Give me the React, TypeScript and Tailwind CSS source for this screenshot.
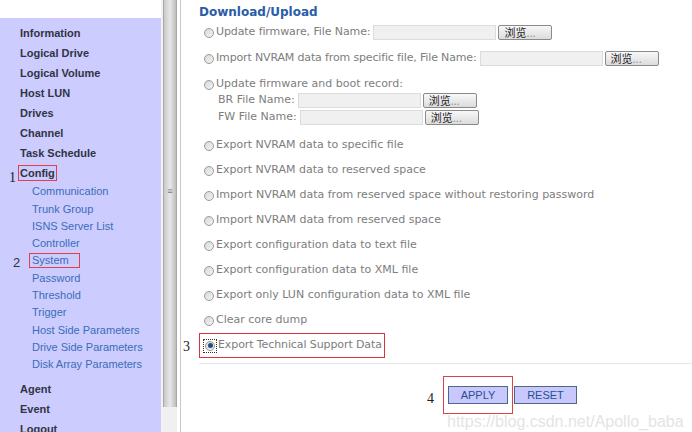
import React from 'react';

const TOP_MENU = ['Information', 'Logical Drive', 'Logical Volume', 'Host LUN', 'Drives', 'Channel', 'Task Schedule'];
const SUB_BEFORE = ['Communication', 'Trunk Group', 'ISNS Server List', 'Controller'];
const SUB_AFTER = ['Password', 'Threshold', 'Trigger', 'Host Side Parameters', 'Drive Side Parameters', 'Disk Array Parameters'];
const BOTTOM_MENU = ['Agent', 'Event', 'Logout'];

const OPTIONS = [
  'Export NVRAM data to specific file',
  'Export NVRAM data to reserved space',
  'Import NVRAM data from reserved space without restoring password',
  'Import NVRAM data from reserved space',
  'Export configuration data to text file',
  'Export configuration data to XML file',
  'Export only LUN configuration data to XML file',
  'Clear core dump',
];

function Radio({ checked = false }: { checked?: boolean }) {
  return (
    <span className="w-[10px] h-[10px] rounded-full border border-[#9a9a9a] bg-gradient-to-br from-[#d8d8d8] to-[#f4f4f4] flex items-center justify-center shrink-0">
      {checked && <span className="w-[5px] h-[5px] rounded-full bg-[#1f4f7a]" />}
    </span>
  );
}

function FileInput() {
  return (
    <span className="flex items-center gap-[2px]">
      <span className="w-[123px] h-[15px] bg-[#f0f0f0] border border-[#dcdcdc]" />
      <span className="w-[54px] h-[15px] border border-[#8a8a8a] rounded-[2px] bg-gradient-to-b from-[#f8f8f8] to-[#dcdcdc] flex items-center pl-[5px] text-[11px] leading-none text-[#222] font-['Noto_Sans_CJK_SC',sans-serif]">
        浏览<span className="text-[#999]">...</span>
      </span>
    </span>
  );
}

export default function App() {
  return (
    <div className="w-[692px] h-[432px] overflow-hidden flex bg-white">
      {/* Sidebar */}
      <div className="w-[161px] shrink-0 flex flex-col">
        <div className="h-[18px] shrink-0 bg-white" />
        <div className="flex-1 bg-[#ccccff] pl-[20px] pt-[5px] font-['Liberation_Sans',Arial,sans-serif] text-[11px]">
          {TOP_MENU.map((m) => (
            <div key={m} className="h-[20px] flex items-center font-bold text-[#333344]">{m}</div>
          ))}
          <div className="h-[20px] flex items-center relative">
            <span className="absolute left-[-11px] top-[4px] text-[14px] font-['Liberation_Serif',serif] text-[#222]">1</span>
            <span className="font-bold text-[#333344] border border-[#e0404a] px-[1px] -ml-[2px] leading-[14px]">Config</span>
          </div>
          <div className="pl-[12px] text-[#3a6cb8]">
            {SUB_BEFORE.map((m) => (
              <div key={m} className="h-[17.3px] flex items-center">{m}</div>
            ))}
            <div className="h-[17.3px] flex items-center relative">
              <span className="absolute left-[-19px] top-[1px] text-[13px] text-[#333]">2</span>
              <span className="border border-[#e0404a] pl-[2px] pr-[10px] -ml-[3px] leading-[13px]">System</span>
            </div>
            {SUB_AFTER.map((m) => (
              <div key={m} className="h-[17.3px] flex items-center">{m}</div>
            ))}
          </div>
          <div className="h-[6px]" />
          {BOTTOM_MENU.map((m) => (
            <div key={m} className="h-[20px] flex items-center font-bold text-[#333344]">{m}</div>
          ))}
        </div>
      </div>

      {/* Splitter */}
      <div className="w-[2px] bg-[#f2f2f2]" />
      <div className="w-[14px] flex flex-col">
        <div className="h-[407px] bg-gradient-to-r from-[#c8c8c8] via-[#e8e8e8] to-[#bdbdbd] border-x border-[#a8a8a8] flex items-center justify-center">
          <span className="text-[9px] text-[#777] leading-none mt-[-26px]">≡</span>
        </div>
        <div className="flex-1 bg-[#f0f0f0]" />
      </div>
      <div className="w-[3px] bg-white" />
      <div className="w-[1px] bg-[#c8c8c8]" />

      {/* Content */}
      <div className="flex-1 relative font-['DejaVu_Sans',Verdana,sans-serif] text-[11px] text-[#7d7d7d]">
        <div className="pl-[18px] pt-[4px]">
          <div className="h-[16px] flex items-center font-bold text-[12px] text-[#2a5ca8]">Download/Upload</div>
          <div className="pl-[5px]">
            <div className="h-[25px] flex items-center gap-[2px]">
              <Radio />
              <span className="mr-[1px] tracking-[-0.1px]">Update firmware, File Name:</span>
              <FileInput />
            </div>
            <div className="h-[25px] flex items-center gap-[2px] mt-[1px]">
              <Radio />
              <span className="mr-[1px] tracking-[-0.15px]">Import NVRAM data from specific file, File Name:</span>
              <FileInput />
            </div>
            <div className="h-[25px] flex items-center gap-[2px] mt-[1px]">
              <Radio />
              <span>Update firmware and boot record:</span>
            </div>
            <div className="pl-[14px] -mt-[5px]">
              <div className="h-[17px] flex items-center gap-[3px]">
                <span>BR File Name:</span>
                <FileInput />
              </div>
              <div className="h-[17px] flex items-center gap-[3px]">
                <span>FW File Name:</span>
                <FileInput />
              </div>
            </div>
            <div className="h-[7px]" />
            {OPTIONS.map((o) => (
              <div key={o} className="h-[25px] flex items-center gap-[2px]">
                <Radio />
                <span>{o}</span>
              </div>
            ))}
          </div>
          <div className="h-[25px] flex items-center relative">
            <span className="absolute left-[-16px] top-[3px] text-[14px] font-['Liberation_Serif',serif] text-[#222]">3</span>
            <div className="h-[25px] border border-[#d8323c] flex items-center pl-[3px] pr-[2px] gap-[1px] whitespace-nowrap">
              <span className="border border-dotted border-[#333] p-[1px]">
                <Radio checked />
              </span>
              <span className="tracking-[-0.1px]">Export Technical Support Data</span>
            </div>
          </div>
        </div>
        <div className="mt-[5px] ml-[18px] h-[1px] bg-[#e6e6e6]" />
        <div className="flex items-center pl-[246px] pt-[12px] relative">
          <span className="absolute left-[246px] top-[24px] text-[14px] font-['Liberation_Serif',serif] text-[#222]">4</span>
          <div className="ml-[16px] border border-[#e0404a] px-[4px] py-[9px] flex">
            <span className="w-[60px] h-[18px] bg-[#c8c8ff] border border-[#4a6a88] flex items-center justify-center text-[11px] text-[#2a4f8f] font-['Liberation_Sans',Arial,sans-serif]">APPLY</span>
          </div>
          <span className="ml-[1px] w-[63px] h-[18px] bg-[#c8c8ff] border border-[#4a6a88] flex items-center justify-center text-[11px] text-[#2a4f8f] font-['Liberation_Sans',Arial,sans-serif]">RESET</span>
        </div>
        <div className="absolute left-[266px] top-[410px] text-[16px] text-[#e4e4e4] font-['Liberation_Sans',Arial,sans-serif]">https://blog.csdn.net/Apollo_baba</div>
      </div>
    </div>
  );
}
